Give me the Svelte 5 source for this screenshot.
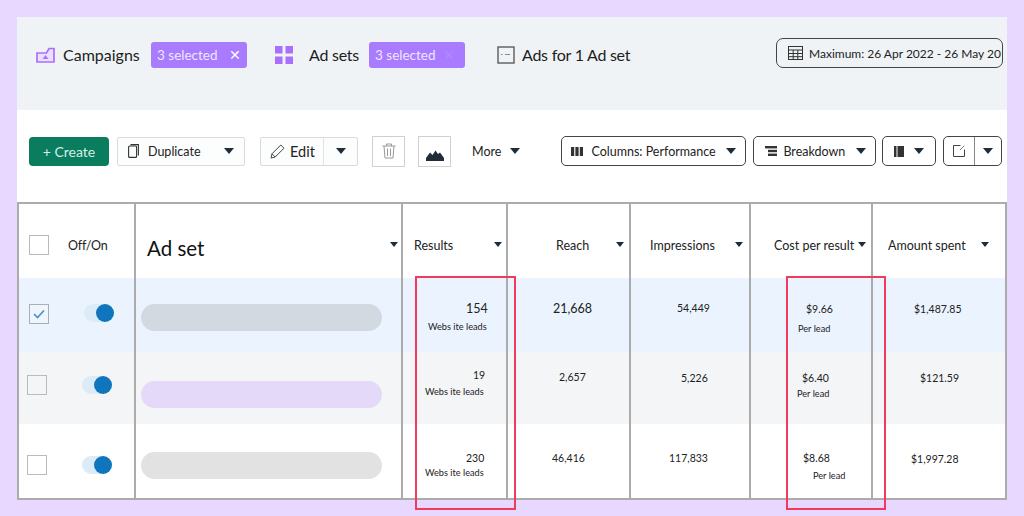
<script>
	const columns = [
		{ label: 'Results', x: 11, caret: 91 },
		{ label: 'Reach', x: 48, caret: 108 },
		{ label: 'Impressions', x: 19, caret: 104 },
		{ label: 'Cost per result', x: 23, caret: 107 },
		{ label: 'Amount spent', x: 15, caret: 108 }
	];

	// nudge = where each value sits inside its cell, it differs per row in the source
	const rows = [
		{
			tone: 'picked',
			checked: true,
			bar: 'slate',
			check: { x: 10, y: 26 },
			toggle: { x: 65, y: 26 },
			cells: [
				{ main: '154', mx: 63, my: 24, size: 'big', sub: 'Webs ite leads', sx: 25, sy: 5 },
				{ main: '21,668', mx: 45, my: 24, size: 'big' },
				{ main: '54,449', mx: 46, my: 23 },
				{ main: '$9.66', mx: 55, my: 24, sub: 'Per lead', sx: 47, sy: 7 },
				{ main: '$1,487.85', mx: 41, my: 24 }
			]
		},
		{
			tone: 'muted',
			checked: false,
			bar: 'lilac',
			check: { x: 8, y: 23 },
			toggle: { x: 63, y: 24 },
			cells: [
				{ main: '19', mx: 70, my: 16, sub: 'Webs ite leads', sx: 22, sy: 4 },
				{ main: '2,657', mx: 51, my: 18 },
				{ main: '5,226', mx: 50, my: 19 },
				{ main: '$6.40', mx: 51, my: 19, sub: 'Per lead', sx: 46, sy: 3 },
				{ main: '$121.59', mx: 47, my: 19 }
			]
		},
		{
			tone: 'plain',
			checked: false,
			bar: 'grey',
			check: { x: 8, y: 31 },
			toggle: { x: 63, y: 32 },
			cells: [
				{ main: '230', mx: 63, my: 27, sub: 'Webs ite leads', sx: 22, sy: 2 },
				{ main: '46,416', mx: 44, my: 27 },
				{ main: '117,833', mx: 38, my: 27 },
				{ main: '$8.68', mx: 52, my: 27, sub: 'Per lead', sx: 62, sy: 5 },
				{ main: '$1,997.28', mx: 38, my: 28 }
			]
		}
	];
</script>

<div class="page">
	<div class="card">
		<div class="tabs">
			<svg class="tab-icon" width="19" height="16" viewBox="0 0 19 16">
				<path d="M1 6h9.500l2.500-4.500h5v13.500h-17z" fill="#eadfff" stroke="#a970ff" stroke-width="1.700" />
				<path d="M9.500 8l2.800 4h-5.600z" fill="#a970ff" />
			</svg>
			<span class="tab-name campaigns">Campaigns</span>
			<span class="badge">3 selected <i class="x">✕</i></span>
			<svg class="squares" width="18" height="18" viewBox="0 0 18 18" fill="#a970ff">
				<rect x="0" y="0" width="7.500" height="7.500" />
				<rect x="10.500" y="0" width="7.500" height="7.500" />
				<rect x="0" y="10.500" width="7.500" height="7.500" />
				<rect x="10.500" y="10.500" width="7.500" height="7.500" />
			</svg>
			<span class="tab-name adsets">Ad sets</span>
			<span class="badge">3 selected <i class="x faint">✕</i></span>
			<svg class="ads-icon" width="18" height="18" viewBox="0 0 18 18">
				<rect x="1" y="1" width="16" height="16" fill="none" stroke="#666" stroke-width="1.500" />
				<path d="M4 8.500h1.500M8 8.500h5" stroke="#888" stroke-width="1.200" />
			</svg>
			<span class="tab-name">Ads for 1 Ad set</span>
			<div class="date">
				<svg width="15" height="14" viewBox="0 0 15 14" fill="none" stroke="#333" stroke-width="1">
					<rect x="0.500" y="0.500" width="14" height="13" />
					<path d="M0.500 4h14M0.500 7.500h14M0.500 10.700h14M5.200 4v9.500M9.800 4v9.500" />
				</svg>
				<span>Maximum: 26 Apr 2022 - 26 May 20</span>
			</div>
		</div>

		<div class="toolbar">
			<button class="create">+ Create</button>
			<button class="soft duplicate">
				<svg width="11" height="14" viewBox="0 0 11 14" fill="none" stroke="#333" stroke-width="1.100">
					<rect x="0.600" y="2" width="8" height="11.400" rx="1" />
					<path d="M2.500 0.600h7.900v11" />
				</svg>
				<span>Duplicate</span>
				<i class="caret push"></i>
			</button>
			<div class="soft edit">
				<span class="edit-main">
					<svg width="15" height="15" viewBox="0 0 15 15" fill="none" stroke="#444" stroke-width="1">
						<path d="M1 14l1-4.200L10.800 1l3.200 3.200-8.800 8.800zM2 9.800l3.200 3.200" />
					</svg>
					Edit
				</span>
				<span class="edit-more"><i class="caret"></i></span>
			</div>
			<button class="square trash">
				<svg width="14" height="16" viewBox="0 0 14 16" fill="none" stroke="#999" stroke-width="1">
					<path d="M0.500 3h13M4.500 3V1h5v2M2 3l1 12h8l1-12M5.500 5.500v7.500M8.500 5.500v7.500" />
				</svg>
			</button>
			<button class="square peaks">
				<svg width="18" height="11" viewBox="0 0 18 11" fill="#1f2d3a">
					<path d="M0 11V8L4 2.500 6.500 5 9.500 0.500l2.500 3.500 2-1.500L18 8v3z" />
				</svg>
			</button>
			<span class="more">More</span>
			<i class="caret more-caret"></i>
			<button class="outline columns-btn">
				<svg width="12" height="9" viewBox="0 0 12 9" fill="#333">
					<rect width="3.200" height="9" />
					<rect x="4.400" width="3.200" height="9" />
					<rect x="8.800" width="3.200" height="9" />
				</svg>
				<span>Columns: Performance</span>
				<i class="caret push"></i>
			</button>
			<button class="outline breakdown">
				<svg width="12" height="10" viewBox="0 0 12 10" fill="#333">
					<rect width="12" height="2.400" />
					<rect x="3" y="3.800" width="9" height="2.400" />
					<rect x="3" y="7.600" width="9" height="2.400" />
				</svg>
				<span>Breakdown</span>
				<i class="caret push"></i>
			</button>
			<button class="outline book">
				<svg width="10" height="11" viewBox="0 0 10 11" fill="#333">
					<path d="M0 0h2.500v11H0zM3.500 0H10v11H3.500z" />
				</svg>
				<i class="caret push"></i>
			</button>
			<div class="outline export">
				<span class="export-main">
					<svg width="12" height="12" viewBox="0 0 12 12" fill="none" stroke="#444" stroke-width="1">
						<path d="M7.500 0.500h-7v11h11v-7" />
						<path d="M7 5l4.500-4.500" stroke="#888" />
					</svg>
				</span>
				<span class="export-more"><i class="caret"></i></span>
			</div>
		</div>

		<div class="table">
			<div class="head c0">
				<span class="check head-check"></span>
				<span class="offon">Off/On</span>
			</div>
			<div class="head c1">
				<span class="adset-title">Ad set</span>
				<i class="caret adset-caret"></i>
			</div>
			{#each columns as col}
				<div class="head metric">
					<span class="metric-label" style="margin-left: {col.x}px">{col.label}</span>
					<i class="caret metric-caret" style="left: {col.caret}px"></i>
				</div>
			{/each}

			{#each rows as row}
				<div class="cell {row.tone} c0">
					<span class="check" class:on={row.checked} style="margin: {row.check.y}px 0 0 {row.check.x}px">
						{#if row.checked}
							<svg width="12" height="10" viewBox="0 0 12 10" fill="none" stroke="#4a8fc0" stroke-width="1.600">
								<path d="M1 5l3.500 3.500L11 1.500" />
							</svg>
						{/if}
					</span>
					<span class="toggle" style="top: {row.toggle.y}px; left: {row.toggle.x}px"><b></b></span>
				</div>
				<div class="cell {row.tone} c1">
					<span class="bar {row.bar}"></span>
				</div>
				{#each row.cells as c}
					<div class="cell {row.tone}">
						<div class="value" class:big={c.size === 'big'} style="margin: {c.my}px 0 0 {c.mx}px">{c.main}</div>
						{#if c.sub}
							<div class="sub" style="margin: {c.sy}px 0 0 {c.sx}px">{c.sub}</div>
						{/if}
					</div>
				{/each}
			{/each}
		</div>
	</div>

	<div class="mark mark-results"></div>
	<div class="mark mark-cost"></div>
</div>

<style>
	:global(body) {
		margin: 0;
		background: #e8d8ff;
	}

	.page {
		position: relative;
		width: 1024px;
		height: 516px;
		padding: 17px 0 0 17px;
		box-sizing: border-box;
		overflow: hidden;
		font-family: Lato, 'Open Sans', sans-serif;
		color: #222;
	}

	.card {
		width: 990px;
		background: #fff;
	}

	svg {
		flex-shrink: 0;
	}

	.tabs {
		display: flex;
		align-items: center;
		height: 93px;
		padding: 0 4px 18px 19px;
		box-sizing: border-box;
		background: #f0f3f6;
	}

	.tab-icon {
		margin-right: 8px;
	}

	.tab-name {
		font-size: 16px;
		letter-spacing: -0.25px;
		color: #1c1e21;
		white-space: nowrap;
	}

	.campaigns {
		width: 88px;
		letter-spacing: 0;
	}

	.adsets {
		width: 60px;
	}

	.badge {
		display: flex;
		align-items: center;
		justify-content: space-between;
		width: 96px;
		height: 26px;
		padding: 0 6px;
		box-sizing: border-box;
		background: #a97bff;
		border-radius: 3px;
		color: #efe6ff;
		font-size: 13.500px;
		white-space: nowrap;
	}

	.x {
		font-style: normal;
		font-size: 14px;
		color: #fff;
	}

	.x.faint {
		color: #b389ff;
		margin-right: 4px;
	}

	.squares {
		margin: 0 16px 0 28px;
	}

	.ads-icon {
		margin: 0 7px 0 32px;
	}

	.date {
		display: flex;
		align-items: center;
		gap: 6px;
		width: 227px;
		height: 30px;
		margin: -3px 0 0 auto;
		padding-left: 11px;
		box-sizing: border-box;
		border: 1px solid #444;
		border-radius: 7px;
		font-size: 12px;
		white-space: nowrap;
	}

	.toolbar {
		display: flex;
		align-items: center;
		height: 92px;
		padding: 0 0 10px 12px;
		box-sizing: border-box;
	}

	button {
		font: inherit;
		color: inherit;
		background: none;
		padding: 0;
	}

	.caret {
		display: block;
		flex-shrink: 0;
		width: 0;
		height: 0;
		border-left: 5px solid transparent;
		border-right: 5px solid transparent;
		border-top: 6px solid #1f2d3a;
	}

	.push {
		margin-left: auto;
	}

	.create {
		width: 80px;
		height: 29px;
		border: 0;
		border-radius: 4px;
		background: #0a7d5f;
		color: #d5efe6;
		font-size: 14px;
	}

	.soft {
		display: flex;
		align-items: center;
		height: 29px;
		box-sizing: border-box;
		border: 1px solid #d9dadc;
		background: #fcfdfd;
		border-radius: 2px;
		font-size: 12.500px;
	}

	.duplicate {
		width: 128px;
		margin-left: 8px;
		padding: 0 10px;
		gap: 9px;
	}

	.edit {
		width: 98px;
		margin-left: 15px;
	}

	.edit-main {
		display: flex;
		align-items: center;
		gap: 5px;
		width: 63px;
		height: 100%;
		padding-left: 9px;
		box-sizing: border-box;
		border-right: 1px solid #e2e3e5;
		font-size: 14.500px;
	}

	.edit-more {
		display: flex;
		flex: 1;
		justify-content: center;
	}

	.square {
		display: flex;
		align-items: center;
		justify-content: center;
		width: 33px;
		height: 31px;
		box-sizing: border-box;
		border: 1px solid #cfd0d2;
		border-radius: 0;
		background: #fff;
	}

	.trash {
		margin-left: 14px;
	}

	.peaks {
		margin-left: 13px;
		padding-top: 8px;
	}

	.more {
		margin-left: 21px;
		font-size: 12.500px;
	}

	.more-caret {
		margin-left: 9px;
	}

	.outline {
		display: flex;
		align-items: center;
		height: 30px;
		box-sizing: border-box;
		border: 1px solid #444;
		border-radius: 5px;
		font-size: 12.500px;
		white-space: nowrap;
	}

	.columns-btn {
		width: 185px;
		margin-left: 41px;
		padding: 0 9px;
		gap: 8px;
	}

	.breakdown {
		width: 123px;
		margin-left: 7px;
		padding: 0 9px 0 11px;
		gap: 6px;
	}

	.book {
		width: 54px;
		margin-left: 6px;
		padding: 0 11px;
	}

	.export {
		width: 59px;
		margin-left: 7px;
	}

	.export-main {
		display: flex;
		align-items: center;
		justify-content: center;
		width: 30px;
		height: 100%;
		border-right: 1px solid #888;
	}

	.export-more {
		display: flex;
		flex: 1;
		justify-content: center;
	}

	.table {
		display: grid;
		grid-template-columns: 117px 267px 105px 123px 120px 122px 132px;
		grid-template-rows: 74px 74px 72px 74px;
		width: 990px;
		box-sizing: border-box;
		border: 2px solid #ababab;
	}

	.head,
	.cell {
		position: relative;
		border-right: 2px solid #ababab;
		box-sizing: border-box;
	}

	.head:nth-child(7),
	.cell:nth-child(7n) {
		border-right: 0;
	}

	.head.c0 {
		display: flex;
		align-items: center;
		padding-top: 8px;
	}

	.check {
		display: block;
		width: 20px;
		height: 20px;
		box-sizing: border-box;
		border: 1px solid #b9bbbe;
		background: #fff;
	}

	.muted .check {
		background: transparent;
	}

	.check.on {
		display: flex;
		align-items: center;
		justify-content: center;
		background: #eef5fd;
		border-color: #a9afb5;
	}

	.head-check {
		margin-left: 10px;
	}

	.offon {
		margin-left: 19px;
		font-size: 12.500px;
		letter-spacing: -0.2px;
	}

	.adset-title {
		position: absolute;
		top: 30px;
		left: 11px;
		font-size: 20.500px;
		line-height: 28px;
		color: #111;
	}

	.adset-caret {
		position: absolute;
		top: 38px;
		right: 3px;
		border-left-width: 4.500px;
		border-right-width: 4.500px;
		border-top-width: 5px;
	}

	.metric-label {
		display: block;
		margin-top: 34px;
		font-size: 12.500px;
		line-height: 16px;
		white-space: nowrap;
	}

	.metric-caret {
		position: absolute;
		top: 38px;
		border-left-width: 4.500px;
		border-right-width: 4.500px;
		border-top-width: 5px;
	}

	.picked {
		background: #ebf4fe;
	}

	.muted {
		background: #f4f5f7;
	}

	.plain {
		background: #fff;
	}

	.c1 {
		display: flex;
		align-items: center;
		padding-left: 5px;
	}

	.bar {
		display: block;
		width: 241px;
		height: 27px;
		border-radius: 14px;
	}

	.slate {
		background: #d2d9e1;
		margin-top: 5px;
	}

	.lilac {
		background: #e5d9fa;
		margin-top: 12px;
	}

	.grey {
		background: #e2e2e2;
		margin-top: 8px;
	}

	.toggle {
		position: absolute;
		display: block;
		width: 30px;
		height: 18px;
		border-radius: 9px;
		background: #dcebf8;
	}

	.toggle b {
		position: absolute;
		top: 0;
		right: 0;
		width: 18px;
		height: 18px;
		border-radius: 50%;
		background: #0f76bd;
	}

	.value {
		font-size: 10.500px;
		line-height: 14px;
		white-space: nowrap;
	}

	.value.big {
		font-size: 12.500px;
	}

	.sub {
		font-size: 9.200px;
		line-height: 12px;
		white-space: nowrap;
	}

	.mark {
		position: absolute;
		top: 276px;
		height: 234px;
		box-sizing: border-box;
		border: 2px solid #f23a5d;
		pointer-events: none;
	}

	.mark-results {
		left: 415px;
		width: 101px;
	}

	.mark-cost {
		left: 786px;
		width: 100px;
	}
</style>
